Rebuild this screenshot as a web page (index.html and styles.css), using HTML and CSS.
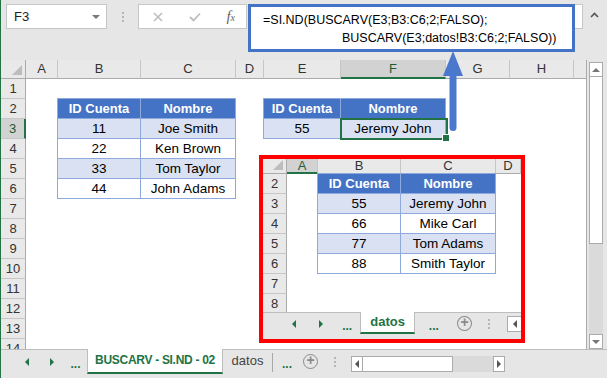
FILE: index.html
```html
<!DOCTYPE html>
<html lang="es">
<head>
    <meta charset="UTF-8">
    <title>BUSCARV - SI.ND - 02</title>
    <link rel="stylesheet" href="styles.css">
</head>
<body>
<div class="app">

    <!-- formula bar -->
    <div class="formula-bar">
        <div class="name-box"><span>F3</span><span class="caret"></span></div>
        <div class="grip"><span class="dots"></span></div>
        <div class="fx-buttons">
            <svg width="10" height="10" viewBox="0 0 10 10"><path d="M1 1L9 9M9 1L1 9" stroke="#bdbdbd" stroke-width="1.6" fill="none"/></svg>
            <svg width="12" height="10" viewBox="0 0 12 10"><path d="M1 5L4.5 8.5L11 1.5" stroke="#bdbdbd" stroke-width="1.8" fill="none"/></svg>
            <span class="fx">f<small>x</small></span>
        </div>
        <div class="formula">
            <div class="formula-box">
                <div>=SI.ND(BUSCARV(E3;B3:C6;2;FALSO);</div>
                <div class="indent">BUSCARV(E3;datos!B3:C6;2;FALSO))</div>
            </div>
            <div class="formula-tail"></div>
        </div>
        <div class="expand">
            <svg width="9" height="6" viewBox="0 0 9 6"><path d="M1 5L4.5 1.5L8 5" stroke="#555" stroke-width="1.6" fill="none"/></svg>
        </div>
    </div>

    <!-- sheet + vertical scrollbar -->
    <div class="workspace">
        <div class="sheet">
            <div class="corner"><span class="tri"></span></div>
            <div class="ch">A</div>
            <div class="ch">B</div>
            <div class="ch">C</div>
            <div class="ch">D</div>
            <div class="ch">E</div>
            <div class="ch active">F</div>
            <div class="ch">G</div>
            <div class="ch">H</div>
            <div class="ch blank"></div>

            <div class="rh">1</div>
            <div class="rh">2</div>
            <div class="rh active">3</div>
            <div class="rh">4</div>
            <div class="rh">5</div>
            <div class="rh">6</div>
            <div class="rh">7</div>
            <div class="rh">8</div>
            <div class="rh">9</div>
            <div class="rh">10</div>
            <div class="rh">11</div>
            <div class="rh">12</div>
            <div class="rh">13</div>
            <div class="rh cut">14</div>

            <div class="tbl tbl-left">
                <div class="th">ID Cuenta</div><div class="th">Nombre</div>
                <div class="td band">11</div><div class="td band">Joe Smith</div>
                <div class="td">22</div><div class="td">Ken Brown</div>
                <div class="td band">33</div><div class="td band">Tom Taylor</div>
                <div class="td">44</div><div class="td">John Adams</div>
            </div>

            <div class="tbl tbl-right">
                <div class="th">ID Cuenta</div><div class="th">Nombre</div>
                <div class="td band">55</div><div class="td band">Jeremy John</div>
            </div>

            <div class="sel"></div>
        </div>

        <div class="vscroll">
            <div class="sb-btn"><span class="up"></span></div>
            <div class="sb-thumb"></div>
            <div class="sb-track"></div>
            <div class="sb-btn"><span class="down"></span></div>
        </div>
    </div>

    <!-- sheet tabs -->
    <div class="tabs">
        <div class="nav"><span class="left"></span></div>
        <div class="nav"><span class="right"></span></div>
        <div class="nav more">...</div>
        <div class="tab active">BUSCARV - SI.ND - 02</div>
        <div class="tab">datos</div>
        <div class="sep"></div>
        <div class="nav more more-r">...</div>
        <div class="add">+</div>
        <div class="grip"><span class="dots"></span></div>
        <div class="hscroll">
            <div class="sb-btn"><span class="left"></span></div>
            <div class="sb-thumb"></div>
            <div class="sb-track"></div>
            <div class="sb-btn"><span class="right"></span></div>
        </div>
    </div>

    <!-- arrow from F3 up to the formula -->
    <svg class="arrow" width="22" height="81" viewBox="0 0 22 81">
        <path d="M11 0L21 25L1 25Z" fill="#4a78cc"/>
        <rect x="7.5" y="23" width="7" height="57" rx="3.5" fill="#4a78cc"/>
    </svg>

    <!-- picture of the 'datos' sheet -->
    <div class="inset">
        <div class="mini-sheet">
            <div class="corner"><span class="tri"></span></div>
            <div class="ch active">A</div>
            <div class="ch">B</div>
            <div class="ch">C</div>
            <div class="ch">D</div>

            <div class="rh">2</div>
            <div class="rh">3</div>
            <div class="rh">4</div>
            <div class="rh">5</div>
            <div class="rh">6</div>
            <div class="rh">7</div>
            <div class="rh cut">8</div>

            <div class="tbl tbl-mini">
                <div class="th">ID Cuenta</div><div class="th">Nombre</div>
                <div class="td band">55</div><div class="td band">Jeremy John</div>
                <div class="td">66</div><div class="td">Mike Carl</div>
                <div class="td band">77</div><div class="td band">Tom Adams</div>
                <div class="td">88</div><div class="td">Smith Taylor</div>
            </div>
        </div>
        <div class="mini-tabs">
            <div class="nav"><span class="left"></span></div>
            <div class="nav"><span class="right"></span></div>
            <div class="nav more">...</div>
            <div class="tab active">datos</div>
            <div class="nav more more-r">...</div>
            <div class="add">+</div>
            <div class="grip"><span class="dots"></span></div>
            <div class="sb-btn stub"><span class="left"></span></div>
        </div>
    </div>

</div>
</body>
</html>
```

FILE: styles.css
```css
/* General */
* {
    box-sizing: border-box;
}

html, body {
    margin: 0;
    padding: 0;
    background: #e6e6e6;
}

body {
    font-family: "Liberation Sans", Arial, sans-serif;
    color: #000;
}

.app {
    position: relative;
    width: 607px;
    height: 378px;
    background: #e6e6e6;
    border-left: 1px solid #217346;
    overflow: hidden;
}

/* Formula bar */
.formula-bar {
    display: flex;
    align-items: flex-start;
    height: 60px;
    padding: 4px 0 0 5px;
}

.name-box {
    display: flex;
    align-items: center;
    justify-content: space-between;
    width: 101px;
    height: 25px;
    padding: 0 6px 0 7px;
    background: #fff;
    border: 1px solid #c6c6c6;
    font-size: 13px;
    color: #222;
}

.caret {
    border-left: 4px solid transparent;
    border-right: 4px solid transparent;
    border-top: 4px solid #7a7a7a;
}

.grip {
    display: flex;
    align-items: center;
    justify-content: center;
    width: 31px;
    height: 25px;
}

.dots {
    display: block;
    width: 2px;
    height: 10px;
    background: repeating-linear-gradient(#b5b5b5 0 2px, transparent 2px 4px);
}

.fx-buttons {
    display: flex;
    align-items: center;
    justify-content: space-between;
    width: 109px;
    height: 25px;
    padding: 0 11px 0 14px;
    background: #fff;
    border: 1px solid #c6c6c6;
}

.fx {
    font-family: "Liberation Serif", serif;
    font-style: italic;
    font-size: 15px;
    color: #666;
}

.fx small {
    font-size: 10px;
}

.formula {
    display: flex;
    align-items: flex-start;
    margin-left: 1px;
}

.formula-box {
    width: 327px;
    height: 48px;
    padding: 4px 0 0 12px;
    background: #fff;
    border: 3px solid #4472c4;
    font-size: 12.5px;
    line-height: 18px;
}

.formula-box .indent {
    padding-left: 79px;
}

.formula-tail {
    width: 8px;
    height: 25px;
    background: #fff;
    border: 1px solid #c6c6c6;
    border-left: none;
}

.expand {
    display: flex;
    align-items: center;
    justify-content: center;
    width: 23px;
    height: 22px;
}

/* Sheet grid */
.workspace {
    display: flex;
    height: 289px;
}

.sheet {
    display: grid;
    grid-template-columns: 25px 32px 83px 95px 28px 77px 105px 64px 64px 12px;
    grid-template-rows: 19px repeat(13, 20px) 10px;
    width: 586px;
    background: #fff;
    border-right: 1px solid #ababab;
    overflow: hidden;
}

.corner {
    position: relative;
    background: #e9e9e9;
    border-right: 1px solid #ababab;
    border-bottom: 1px solid #ababab;
}

.tri {
    position: absolute;
    right: 3px;
    bottom: 3px;
    border-left: 10px solid transparent;
    border-bottom: 10px solid #bdbdbd;
}

.ch {
    background: #e9e9e9;
    border-right: 1px solid #c6c6c6;
    border-bottom: 1px solid #ababab;
    font-size: 13px;
    line-height: 18px;
    text-align: center;
    color: #333;
}

.ch.blank {
    border-right: none;
}

.ch.active {
    background: #d2d2d2;
    border-bottom: 2px solid #217346;
    color: #1d5a35;
}

.rh {
    grid-column: 1;
    background: #e9e9e9;
    border-right: 1px solid #ababab;
    border-bottom: 1px solid #c6c6c6;
    font-size: 13px;
    line-height: 19px;
    text-align: center;
    color: #333;
}

.rh.active {
    background: #d2d2d2;
    border-right: 2px solid #217346;
    color: #1d5a35;
}

.rh.cut {
    border-bottom: none;
}

/* Tables */
.tbl {
    display: grid;
    grid-template-columns: 83px 95px;
    grid-auto-rows: 20px;
    margin: -1px 0 0 -1px;
    border-left: 1px solid #8ea9db;
    border-top: 1px solid #8ea9db;
    align-self: start;
}

.tbl-left {
    grid-column: 3 / 5;
    grid-row: 3 / 8;
    width: 179px;
}

.tbl-right {
    grid-column: 6 / 8;
    grid-row: 3 / 5;
    grid-template-columns: 77px 105px;
    width: 183px;
}

.th, .td {
    border-right: 1px solid #8ea9db;
    border-bottom: 1px solid #8ea9db;
    text-align: center;
    line-height: 19px;
    white-space: nowrap;
}

.th {
    background: #4472c4;
    color: #fff;
    font-weight: bold;
    font-size: 13px;
}

.td {
    background: #fff;
    font-size: 13.5px;
}

.td.band {
    background: #d9e1f2;
}

.sel {
    position: relative;
    grid-column: 7;
    grid-row: 4;
    margin: -1px -2px -1px -1px;
    border: 2px solid #217346;
    z-index: 2;
}

.sel::after {
    content: "";
    position: absolute;
    right: -4px;
    bottom: -4px;
    width: 6px;
    height: 6px;
    background: #217346;
    border: 1px solid #fff;
}

/* Scrollbars */
.vscroll {
    display: flex;
    flex-direction: column;
    width: 20px;
    padding: 2px 0 0 2px;
}

.vscroll > div {
    width: 14px;
}

.sb-btn {
    display: flex;
    align-items: center;
    justify-content: center;
    width: 14px;
    height: 15px;
    background: #fff;
    border: 1px solid #ababab;
    flex: none;
}

.sb-thumb {
    height: 167px;
    background: #fff;
    border: 1px solid #ababab;
    border-top: none;
}

.sb-track {
    flex: 1;
    background: #dadada;
}

.up {
    border-left: 4px solid transparent;
    border-right: 4px solid transparent;
    border-bottom: 4px solid #777;
}

.down {
    border-left: 4px solid transparent;
    border-right: 4px solid transparent;
    border-top: 4px solid #777;
}

.left {
    border-top: 4px solid transparent;
    border-bottom: 4px solid transparent;
    border-right: 4px solid #217346;
}

.right {
    border-top: 4px solid transparent;
    border-bottom: 4px solid transparent;
    border-left: 4px solid #217346;
}

/* Sheet tabs */
.tabs {
    display: flex;
    align-items: flex-start;
    height: 29px;
    padding-left: 13px;
    border-top: 1px solid #bdbdbd;
}

.nav {
    display: flex;
    align-items: center;
    justify-content: center;
    width: 25px;
    height: 24px;
}

.nav.more {
    width: 23px;
    font-weight: bold;
    font-size: 12px;
    color: #217346;
    padding-top: 4px;
}

.nav.more-r {
    width: 26px;
    margin-left: 1px;
}

.tab {
    width: 49px;
    height: 24px;
    font-size: 13px;
    line-height: 22px;
    text-align: center;
    color: #444;
}

.tab.active {
    width: 136px;
    margin-top: -1px;
    height: 25px;
    background: #fff;
    border-left: 1px solid #bdbdbd;
    border-right: 1px solid #bdbdbd;
    border-bottom: 2px solid #217346;
    font-weight: bold;
    font-size: 12px;
    letter-spacing: -0.3px;
    line-height: 23px;
    color: #217346;
}

.sep {
    width: 1px;
    height: 19px;
    margin: 3px 0 0 0;
    background: #a8a8a8;
}

.add {
    width: 15px;
    height: 15px;
    margin: 4px 0 0 3px;
    border: 1.5px solid #8a8a8a;
    border-radius: 50%;
    font-size: 14px;
    line-height: 11px;
    text-align: center;
    color: #8a8a8a;
    font-weight: bold;
}

.tabs .grip {
    width: 33px;
    height: 23px;
}

.hscroll {
    display: flex;
    width: 154px;
    height: 16px;
    margin-top: 6px;
}

.hscroll .sb-btn {
    width: 12px;
    height: 16px;
}

.hscroll .sb-btn .left,
.hscroll .sb-btn .right {
    border-right-color: #555;
    border-left-color: #555;
}

.hscroll .sb-thumb {
    width: 90px;
    height: 16px;
    border: 1px solid #ababab;
    border-left: none;
}

.hscroll .sb-track {
    flex: 1;
}

/* Inset picture of the 'datos' sheet */
.arrow {
    position: absolute;
    left: 441px;
    top: 51px;
    z-index: 3;
}

.inset {
    position: absolute;
    left: 258px;
    top: 155px;
    width: 266px;
    height: 188px;
    border: 4px solid #ff0000;
    background: #e6e6e6;
    overflow: hidden;
    z-index: 4;
}

.mini-sheet {
    display: grid;
    grid-template-columns: 24px 31px 83px 95px 25px;
    grid-template-rows: 15px repeat(6, 20px) 18px;
    background: #fff;
}

.mini-sheet .ch {
    line-height: 14px;
}

.tbl-mini {
    grid-column: 3 / 5;
    grid-row: 2 / 7;
    width: 179px;
}

.mini-tabs {
    display: flex;
    align-items: flex-start;
    height: 27px;
    padding-left: 17px;
    border-top: 1px solid #bdbdbd;
}

.mini-tabs .nav {
    width: 28px;
    height: 21px;
}

.mini-tabs .nav.more {
    width: 26px;
}

.mini-tabs .nav.more-r {
    width: 38px;
    margin-left: 0;
}

.mini-tabs .tab.active {
    width: 57px;
    height: 22px;
    line-height: 20px;
    font-size: 13px;
    letter-spacing: 0;
}

.mini-tabs .add {
    margin: 3px 0 0 5px;
}

.mini-tabs .grip {
    width: 36px;
    height: 21px;
}

.sb-btn.stub {
    width: 14px;
    height: 16px;
    margin-top: 3px;
    border-right: none;
}

.sb-btn.stub .left {
    border-right-color: #555;
}
```
